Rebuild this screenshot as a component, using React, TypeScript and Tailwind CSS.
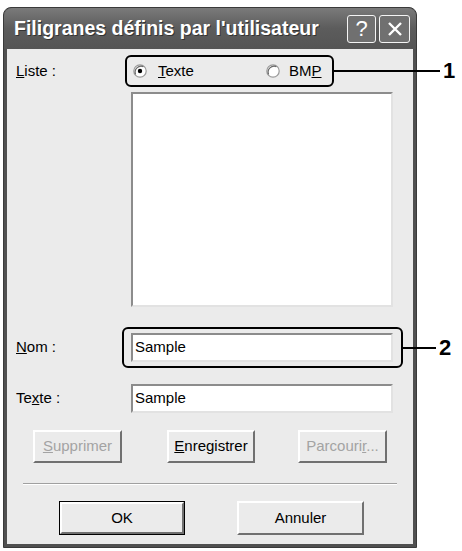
import React from "react";

const sunken =
  "bg-white border-2 border-t-[#8c8c8c] border-l-[#8c8c8c] border-r-[#e2e2e2] border-b-[#e2e2e2]";

const raised =
  "bg-[#ebebeb] border-2 border-t-white border-l-white border-r-[#707070] border-b-[#707070] flex items-center justify-center";

const Radio = ({ checked }: { checked?: boolean }) => (
  <svg width="14" height="14" viewBox="0 0 14 14">
    <circle cx="7" cy="7" r="6.2" fill="#ffffff" stroke="#9a9a9a" strokeWidth="1.2" />
    <path d="M2.6 10.4 A6 6 0 0 1 10.4 2.6" fill="none" stroke="#6a6a6a" strokeWidth="1.2" />
    {checked && <circle cx="7" cy="7" r="2.2" fill="#000" />}
  </svg>
);

const Leader = ({ label, width }: { label: string; width: number }) => (
  <div className="absolute left-full top-1/2 -translate-y-1/2 flex items-center">
    <div className="h-[2px] bg-black" style={{ width }} />
    <span className="ml-[3px] text-[22px] font-bold leading-none">{label}</span>
  </div>
);

export default function App() {
  return (
    <div className="w-[462px] h-[551px] bg-white overflow-hidden font-['Liberation_Sans',Arial,sans-serif] text-[15px] text-black">
      <div className="ml-[3px] mt-[7px] w-[414px] h-[541px] flex flex-col rounded-t-[8px] bg-[#505050] border border-[#3a3a3a]">
        {/* title bar */}
        <div className="h-[41px] flex items-center rounded-t-[8px] bg-gradient-to-b from-[#7a7a7a] via-[#5c5c5c] to-[#555555] pl-[10px] pr-[6px]">
          <span className="text-white font-bold text-[19.5px] tracking-[0px] flex-1 [text-shadow:1px_1px_0_#333]">
            Filigranes définis par l'utilisateur
          </span>
          <div className="w-[29px] h-[28px] rounded-[3px] border-[1.5px] border-[#f4f4f4] bg-[#707070] flex items-center justify-center text-white text-[22px] leading-none">
            ?
          </div>
          <div className="ml-[3px] w-[31px] h-[28px] rounded-[3px] border-[1.5px] border-[#f4f4f4] bg-[#707070] flex items-center justify-center">
            <svg width="16" height="16" viewBox="0 0 16 16">
              <path d="M2 2 L14 14 M14 2 L2 14" stroke="#fff" strokeWidth="2.4" />
            </svg>
          </div>
        </div>

        {/* client area */}
        <div className="flex-1 mx-[3px] mb-[3px] bg-[#ebebeb] pt-[6px]">
          <div className="flex items-center">
            <div className="w-[118px] pl-[9px]">
              <u>L</u>iste :
            </div>
            <div className="relative w-[209px] h-[32px] border-2 border-black rounded-[6px] flex items-center pl-[6px]">
              <Radio checked />
              <span className="ml-[11px] w-[108px]">
                <u>T</u>exte
              </span>
              <Radio />
              <span className="ml-[9px]">
                BM<u>P</u>
              </span>
              <Leader label="1" width={108} />
            </div>
          </div>

          <div className={`ml-[124px] mt-[5px] w-[262px] h-[215px] ${sunken}`} />

          <div className="flex items-center mt-[20px]">
            <div className="w-[115px] pl-[9px]">
              <u>N</u>om :
            </div>
            <div className="relative w-[281px] h-[41px] border-2 border-black rounded-[6px] flex items-center pl-[7px]">
              <div className={`w-[262px] h-[29px] flex items-center pl-[2px] ${sunken}`}>Sample</div>
              <Leader label="2" width={35} />
            </div>
          </div>

          <div className="flex items-center mt-[16px]">
            <div className="w-[124px] pl-[9px]">
              Te<u>x</u>te :
            </div>
            <div className={`w-[262px] h-[29px] flex items-center pl-[2px] ${sunken}`}>Sample</div>
          </div>

          <div className="flex mt-[17px]">
            <div className={`ml-[26px] w-[89px] h-[33px] text-[#a3a3a3] ${raised}`}>
              <span>
                <u>S</u>upprimer
              </span>
            </div>
            <div className={`ml-[45px] w-[88px] h-[33px] ${raised}`}>
              <span>
                <u>E</u>nregistrer
              </span>
            </div>
            <div className={`ml-[43px] w-[89px] h-[33px] text-[#a3a3a3] ${raised}`}>
              <span>
                Parcouri<u>r</u>...
              </span>
            </div>
          </div>

          <div className="ml-[16px] mt-[20px] w-[374px] border-t border-t-[#a0a0a0] border-b border-b-white" />

          <div className="flex mt-[16px]">
            <div className="ml-[52px] w-[126px] h-[34px] border border-black">
              <div className={`w-full h-full ${raised}`}>OK</div>
            </div>
            <div className={`ml-[52px] w-[127px] h-[34px] ${raised}`}>Annuler</div>
          </div>
        </div>
      </div>
    </div>
  );
}
